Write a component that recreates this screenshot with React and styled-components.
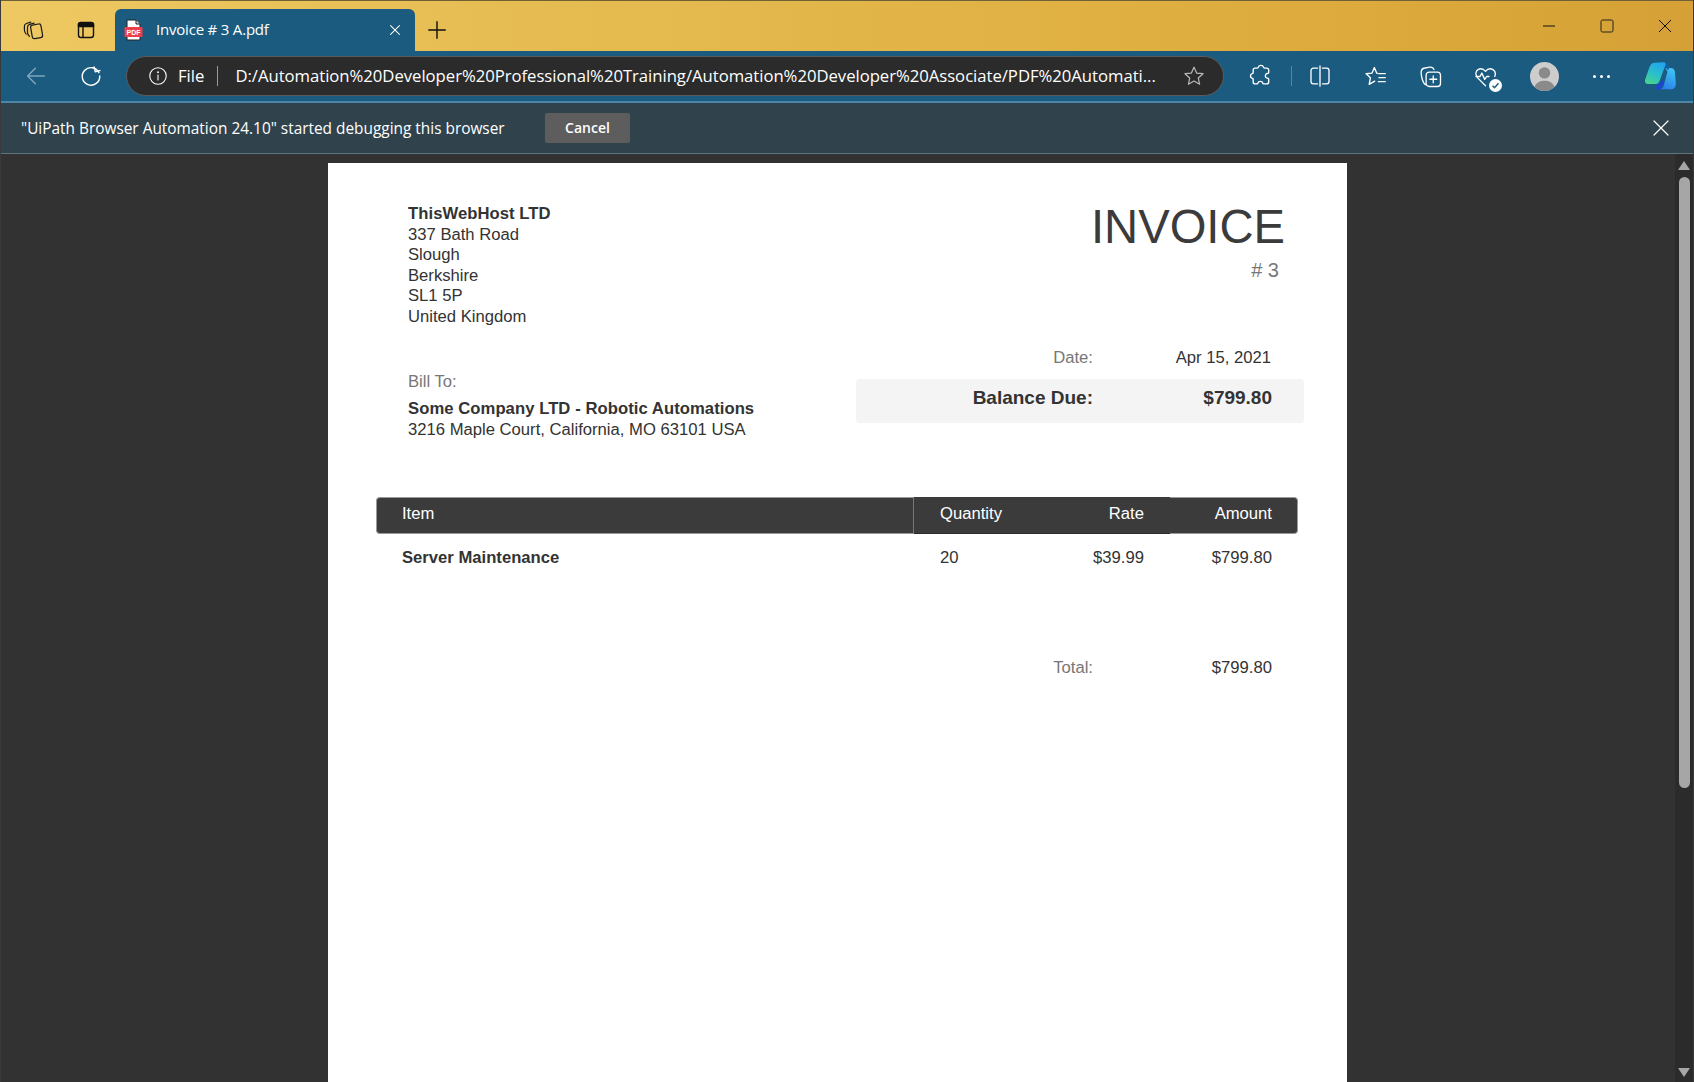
import React from "react";
import styled, { createGlobalStyle } from "styled-components";

const Global = createGlobalStyle`
  html, body { margin: 0; padding: 0; background: #323232; overflow: hidden; }
  * { box-sizing: border-box; }
`;

const Stroke = ({ size = 20, color = "#fff", w = 1.3, children }) => (
  <svg width={size} height={size} viewBox="0 0 20 20" fill="none" stroke={color} strokeWidth={w} strokeLinecap="round" strokeLinejoin="round">
    {children}
  </svg>
);

export default function App() {
  return (
    <Window>
      <Global />
      <TitleBar>
        <LeftIcons>
          <TabIconBtn>
            <Stroke size={22} color="#1a1a1a" w={1.1}>
              <rect x="8.5" y="5" width="9.5" height="12.5" rx="2" transform="rotate(-10 13 11)" />
              <path d="M6.8 15.800C5.600 14.800 5 13.500 5 12V7.500c0-1.200.7-2.200 2-2.600l4-1.200" />
              <path d="M3.800 13.800C2.800 12.800 2.200 11.500 2.200 10V6.500c0-1.200.6-2 1.800-2.400l4-1.300" />
            </Stroke>
          </TabIconBtn>
          <TabIconBtn>
            <Stroke color="#111" w={1.4}>
              <rect x="2.500" y="2.500" width="15" height="15" rx="2.500" />
              <path d="M2.500 3.500h15v3h-15z" fill="#111" />
              <path d="M7 6v11" />
            </Stroke>
          </TabIconBtn>
        </LeftIcons>
        <Tab>
          <svg width="19" height="22" viewBox="0 0 19 22">
            <path d="M3 1h9l4 4v16H3z" fill="#fff" stroke="#222" />
            <path d="M12 1v4h4" fill="#ddd" stroke="#222" />
            <rect x="0.500" y="8" width="18" height="10" rx="1" fill="#ee3d4b" />
            <text x="9.500" y="15.800" textAnchor="middle" fontSize="7" fontWeight="700" fontFamily="Liberation Sans, sans-serif" fill="#fff">PDF</text>
          </svg>
          <TabTitle>Invoice # 3 A.pdf</TabTitle>
          <Stroke size={16} w={1.3}>
            <path d="M4.500 4.500l11 11M15.500 4.500l-11 11" />
          </Stroke>
        </Tab>
        <NewTab>
          <Stroke size={22} color="#111" w={1.3}>
            <path d="M10 2.500v15M2.500 10h15" />
          </Stroke>
        </NewTab>
        <WindowControls>
          <WinBtn>
            <svg width="14" height="14" viewBox="0 0 14 14"><path d="M1 7h12" stroke="#111" strokeWidth="1" /></svg>
          </WinBtn>
          <WinBtn>
            <svg width="14" height="14" viewBox="0 0 14 14"><rect x="1" y="1" width="12" height="12" rx="1.500" fill="none" stroke="#222" strokeWidth="1" /></svg>
          </WinBtn>
          <WinBtn>
            <svg width="14" height="14" viewBox="0 0 14 14"><path d="M1 1l12 12M13 1L1 13" stroke="#111" strokeWidth="1" /></svg>
          </WinBtn>
        </WindowControls>
      </TitleBar>

      <AddressBar>
        <NavBtn>
          <Stroke size={24} color="#7fa6bd" w={1.2}>
            <path d="M17 10H3M9.500 3.500L3 10l6.500 6.500" />
          </Stroke>
        </NavBtn>
        <NavBtn>
          <Stroke size={24} w={1.2}>
            <path d="M16.600 7.200A7.300 7.300 0 1 0 17.300 10" />
            <path d="M12.600 2.500l.9 3.900 3.900-.9" />
          </Stroke>
        </NavBtn>
        <UrlPill>
          <Stroke size={20} w={1.1}>
            <circle cx="10" cy="10" r="8.200" />
            <path d="M10 9v5" />
            <circle cx="10" cy="6.200" r=".4" fill="#fff" />
          </Stroke>
          <Scheme>File</Scheme>
          <Divider />
          <Url>D:/Automation%20Developer%20Professional%20Training/Automation%20Developer%20Associate/PDF%20Automati...</Url>
          <Stroke size={22} color="#b9b9b9" w={1.1}>
            <path d="M10 2l2.400 5.300 5.800.6-4.300 3.900 1.200 5.700L10 14.600l-5.100 2.900 1.200-5.700L1.800 7.900l5.800-.6z" />
          </Stroke>
        </UrlPill>
        <ToolIcons>
          <PuzzleBtn>
            <Stroke size={26} w={1.05}>
              <path d="M8 3.200c.5-1.800 3.400-1.800 3.900 0 .1.500.4.700 1 .7h1.500c.9 0 1.500.6 1.500 1.500v1.900c0 .5-.4.8-.9.8-2-.2-2.300 3.600 0 3.500.5 0 .9.300.9.800v2.200c0 .9-.6 1.500-1.500 1.500h-2.200c-.5 0-.8-.3-.9-.8-.3-1.600-3.300-1.600-3.600 0-.1.500-.4.800-.9.800H5.500c-.9 0-1.500-.6-1.500-1.500v-2c0-.5-.3-.8-.8-.9-1.700-.4-1.700-3.100 0-3.500.5-.1.800-.4.800-.9V5.400c0-.9.6-1.500 1.500-1.500H7c.5 0 .9-.2 1-.7z" />
            </Stroke>
          </PuzzleBtn>
          <ToolDivider />
          <ToolBtn>
            <Stroke size={24} w={1.1}>
              <path d="M8 3.500H4.500a2 2 0 0 0-2 2v9a2 2 0 0 0 2 2H8M12 3.500h3.500a2 2 0 0 1 2 2v9a2 2 0 0 1-2 2H12M10 1.500v17" />
            </Stroke>
          </ToolBtn>
          <ToolBtn>
            <Stroke size={23} w={1.15}>
              <path d="M12 7.200L11 7 9 2.200 7 7l-5.200.6L5.600 11l-1.100 5.800L9.300 14" />
              <path d="M13 7.500h5.500M13 11h5.500M12.500 14.500h6" />
            </Stroke>
          </ToolBtn>
          <ToolBtn>
            <Stroke size={25} w={1.05}>
              <path d="M6 16.500C3.500 15 3 12 2.500 7.500 2.300 5 3.300 3.500 5.500 3.200l4-.7c1.500-.2 2.700.4 3.300 2" />
              <rect x="6.500" y="6.500" width="11.500" height="11.500" rx="2.500" />
              <path d="M12.200 9.500v5.500M9.500 12.200H15" />
            </Stroke>
          </ToolBtn>
          <ToolBtn>
            <OverlayWrap>
              <Stroke size={23} w={1.15}>
                <path d="M10 18l-7-7C1 8.500 1.200 5.500 3.500 4c2.300-1.300 4.800-.6 6.500 1.500C11.700 3.400 14.200 2.700 16.500 4c2 1.300 2.500 3.700 1.500 6" />
                <path d="M1.800 10h3.500l1.500-3 2.500 5.500 1.700-2.500h2" />
              </Stroke>
              <CheckBadge>
                <svg width="13" height="13" viewBox="0 0 13 13" fill="none"><path d="M3.500 6.800l2 1.900 4-4.500" stroke="#1b5b80" strokeWidth="1.500" /></svg>
              </CheckBadge>
            </OverlayWrap>
          </ToolBtn>
          <Avatar>
            <svg width="29" height="29" viewBox="0 0 28 28">
              <circle cx="14" cy="10.500" r="5.500" fill="#8a8a8a" />
              <path d="M4 25c1.500-5.500 6-7 10-7s8.500 1.500 10 7c-3 2.500-6.500 3-10 3s-7-.5-10-3z" fill="#8a8a8a" />
            </svg>
          </Avatar>
          <MoreBtn>
            <Dot /><Dot /><Dot />
          </MoreBtn>
          <CopilotBtn>
            <svg width="32" height="30" viewBox="0 0 30 28">
              <defs>
                <linearGradient id="cpA" x1="0.700" y1="0" x2="0.200" y2="1">
                  <stop offset="0" stopColor="#22a5ee" />
                  <stop offset="0.550" stopColor="#2cc0c8" />
                  <stop offset="1" stopColor="#48d58a" />
                </linearGradient>
                <linearGradient id="cpB" x1="0.700" y1="0" x2="0.300" y2="1">
                  <stop offset="0" stopColor="#3fc4f6" />
                  <stop offset="1" stopColor="#2a7fe8" />
                </linearGradient>
              </defs>
              <path d="M20 6.500h5c2.500 0 3.500 1.500 4 3.500l.8 11c.2 3.500-1.800 5.500-4.800 5.500H15c2-.5 3-2 3.500-3.500L22 10z" fill="url(#cpB)" />
              <path d="M17 1.200c3-.2 5.500 1.300 6 4.300l.5 2.500h-2L20 5c0-2-1-3.400-3-3.800z" fill="#0f62b0" />
              <path d="M13 21.500l6-4.500-1.500 6c-.5 2.500-2.500 4-4.500 4-1.500 0-2-2-1.500-3.500z" fill="#1d46d0" />
              <path d="M10 1.500l8-.5c2 0 3 1.500 2 3l-5.500 15c-.7 2-2 2.500-3.500 2.500H4c-2.500 0-3.500-1.500-3-4L5 6c1-3 2.500-4.500 5-4.500z" fill="url(#cpA)" />
            </svg>
          </CopilotBtn>
        </ToolIcons>
      </AddressBar>

      <InfoBar>
        <InfoText>"UiPath Browser Automation 24.10" started debugging this browser</InfoText>
        <CancelButton>Cancel</CancelButton>
        <InfoClose>
          <Stroke size={20} w={1.2}>
            <path d="M3 3l14 14M17 3L3 17" />
          </Stroke>
        </InfoClose>
      </InfoBar>

      <Viewer>
        <PageArea>
          <Page>
            <TopRow>
              <Sender>
                <strong>ThisWebHost LTD</strong>
                <span>337 Bath Road</span>
                <span>Slough</span>
                <span>Berkshire</span>
                <span>SL1 5P</span>
                <span>United Kingdom</span>
              </Sender>
              <Heading>
                <h1>INVOICE</h1>
                <InvoiceNo># 3</InvoiceNo>
              </Heading>
            </TopRow>
            <MetaRow>
              <BillTo>
                <Muted>Bill To:</Muted>
                <strong>Some Company LTD - Robotic Automations</strong>
                <span>3216 Maple Court, California, MO 63101 USA</span>
              </BillTo>
              <Summary>
                <DateRow>
                  <Muted>Date:</Muted>
                  <DateValue>Apr 15, 2021</DateValue>
                </DateRow>
                <Balance>
                  <span>Balance Due:</span>
                  <BalanceValue>$799.80</BalanceValue>
                </Balance>
              </Summary>
            </MetaRow>
            <ItemTable>
              <HeadRow>
                <HeadItem>Item</HeadItem>
                <HeadMiddle>
                  <HeadCell $w={127}>Quantity</HeadCell>
                  <HeadCell $w={129} $right>Rate</HeadCell>
                </HeadMiddle>
                <HeadAmount>Amount</HeadAmount>
              </HeadRow>
              <BodyRow>
                <BodyItem>Server Maintenance</BodyItem>
                <BodyCell $w={127}>20</BodyCell>
                <BodyCell $w={129} $right>$39.99</BodyCell>
                <BodyCell $w={128} $right>$799.80</BodyCell>
              </BodyRow>
            </ItemTable>
            <TotalRow>
              <Muted>Total:</Muted>
              <TotalValue>$799.80</TotalValue>
            </TotalRow>
          </Page>
        </PageArea>
        <ScrollTrack>
          <ArrowUp />
          <Thumb />
          <ArrowDown />
        </ScrollTrack>
      </Viewer>
    </Window>
  );
}

const Window = styled.div`
  width: 1694px;
  height: 1082px;
  display: flex;
  flex-direction: column;
  overflow: hidden;
  border-left: 1px solid #3a3a3a;
  border-right: 1px solid #3a3a3a;
  font-family: "Open Sans", "Noto Sans", sans-serif;
  background: #323232;
`;

const TitleBar = styled.div`
  height: 51px;
  flex: none;
  display: flex;
  align-items: flex-end;
  border-top: 1px solid #6f6136;
  background: linear-gradient(90deg, #eec862 0%, #e5bb50 35%, #dfae40 70%, #d5a136 100%);
`;

const LeftIcons = styled.div`
  display: flex;
  height: 100%;
  align-items: center;
  padding-top: 8px;
  gap: 13px;
  padding-left: 12px;
  width: 114px;
`;

const TabIconBtn = styled.div`
  width: 40px;
  height: 40px;
  flex: none;
  display: flex;
  align-items: center;
  justify-content: center;
`;

const Tab = styled.div`
  width: 300px;
  height: 42px;
  background: #1b5b80;
  border-radius: 6px 6px 0 0;
  display: flex;
  align-items: center;
  padding: 0 12px 0 9px;
  color: #fff;
`;

const TabTitle = styled.span`
  flex: 1;
  margin-left: 13px;
  padding-bottom: 2px;
  font-size: 15px;
  font-family: "Open Sans", sans-serif;
  letter-spacing: -0.2px;
`;

const NewTab = styled.div`
  width: 40px;
  height: 42px;
  margin-left: 2px;
  display: flex;
  align-items: center;
  justify-content: center;
`;

const WindowControls = styled.div`
  margin-left: auto;
  margin-right: -1px;
  height: 100%;
  display: flex;
  align-items: flex-start;
`;

const WinBtn = styled.div`
  width: 58px;
  height: 50px;
  display: flex;
  align-items: center;
  justify-content: center;
`;

const AddressBar = styled.div`
  height: 52px;
  flex: none;
  background: #1b5b80;
  border-bottom: 2px solid #4a87a9;
  display: flex;
  align-items: center;
  padding-left: 15px;
`;

const NavBtn = styled.div`
  width: 40px;
  height: 40px;
  margin-right: 15px;
  display: flex;
  align-items: center;
  justify-content: center;
`;

const UrlPill = styled.div`
  width: 1098px;
  height: 40px;
  border: 1px solid #5b5b5b;
  border-radius: 20px;
  background: #2b2b2b;
  display: flex;
  align-items: center;
  padding: 0 18px 0 21px;
  color: #fff;
  font-size: 16.7px;
`;

const Scheme = styled.span`
  margin-left: 10px;
  padding-bottom: 2px;
`;

const Divider = styled.div`
  width: 1px;
  height: 20px;
  background: #9a9a9a;
  margin: 0 17px 0 13px;
`;

const Url = styled.span`
  flex: 1;
  padding-bottom: 2px;
  white-space: nowrap;
  overflow: hidden;
  letter-spacing: -0.03px;
`;

const ToolIcons = styled.div`
  display: flex;
  align-items: center;
  margin-left: 17px;
`;

const ToolBtn = styled.div`
  width: 40px;
  height: 40px;
  margin-right: 15px;
  display: flex;
  align-items: center;
  justify-content: center;
`;

const PuzzleBtn = styled(ToolBtn)`
  margin-right: 0;
`;

const ToolDivider = styled.div`
  width: 1px;
  height: 20px;
  background: #4f8aab;
  margin: 0 8px 0 10px;
`;

const OverlayWrap = styled.div`
  position: relative;
  width: 23px;
  height: 23px;
`;

const CheckBadge = styled.div`
  position: absolute;
  right: -5px;
  bottom: -4px;
  width: 13px;
  height: 13px;
  border-radius: 50%;
  background: #fff;
  display: flex;
`;

const Avatar = styled.div`
  width: 29px;
  height: 29px;
  margin: 0 34px 0 10px;
  border-radius: 50%;
  background: #cdcdcd;
  overflow: hidden;
`;

const MoreBtn = styled.div`
  display: flex;
  gap: 4px;
  width: 17px;
  margin-right: 34px;
`;

const Dot = styled.span`
  width: 3px;
  height: 3px;
  flex: none;
  border-radius: 50%;
  background: #fff;
`;

const CopilotBtn = styled.div`
  width: 32px;
  height: 30px;
`;

const InfoBar = styled.div`
  height: 51px;
  flex: none;
  background: #30434d;
  border-bottom: 1px solid #5f7681;
  display: flex;
  align-items: center;
  padding-left: 20px;
  color: #fff;
`;

const InfoText = styled.span`
  font-size: 15.4px;
  font-family: "Open Sans", sans-serif;
  width: 524px;
  white-space: nowrap;
`;

const CancelButton = styled.button`
  width: 85px;
  height: 30px;
  padding: 0 0 2px;
  border: 0;
  border-radius: 2px;
  background: #5d5d5d;
  color: #fff;
  font: 600 14px "Open Sans", sans-serif;
`;

const InfoClose = styled.div`
  margin-left: auto;
  margin-right: 22px;
  display: flex;
`;

const Viewer = styled.div`
  flex: 1;
  min-height: 0;
  display: flex;
  background: #323232;
`;

const PageArea = styled.div`
  flex: 1;
  display: flex;
  justify-content: flex-start;
  padding: 9px 0 0 327px;
  overflow: hidden;
`;

const Page = styled.div`
  width: 1019px;
  height: 1000px;
  background: #fff;
  padding: 41px 42px 0 48px;
  color: #333;
  font-family: "Liberation Sans", Arial, sans-serif;
  font-size: 16.65px;
  strong { letter-spacing: 0.06px; }
`;

const TopRow = styled.div`
  display: flex;
  justify-content: space-between;
  padding-left: 32px;
  padding-right: 20px;
`;

const Sender = styled.div`
  display: flex;
  flex-direction: column;
  line-height: 20.5px;
  strong { font-weight: 700; }
`;

const Heading = styled.div`
  text-align: right;
  h1 {
    margin: -1px 0 0;
    font-size: 47.2px;
    line-height: 48px;
    font-weight: 400;
    color: #3b3b3b;
  }
`;

const InvoiceNo = styled.div`
  margin-top: 7px;
  padding-right: 6px;
  font-size: 20px;
  line-height: 24px;
  color: #777;
`;

const MetaRow = styled.div`
  display: flex;
  justify-content: space-between;
  margin-top: 17px;
`;

const BillTo = styled.div`
  display: flex;
  flex-direction: column;
  padding-left: 32px;
  padding-top: 27px;
  line-height: 21px;
  strong { font-weight: 700; margin-top: 6px; }
`;

const Muted = styled.span`
  color: #777;
`;

const Summary = styled.div`
  width: 448px;
  margin-right: 1px;
  padding-top: 1px;
  display: flex;
  flex-direction: column;
`;

const DateRow = styled.div`
  display: flex;
  justify-content: flex-end;
  height: 34px;
  padding-right: 33px;
  align-items: flex-start;
  line-height: 25px;
`;

const DateValue = styled.span`
  width: 178px;
  text-align: right;
  color: #333;
`;

const Balance = styled.div`
  height: 44px;
  border-radius: 4px;
  background: #f4f4f4;
  display: flex;
  justify-content: flex-end;
  align-items: center;
  padding: 0 32px 7px 0;
  font-size: 19px;
  font-weight: 700;
`;

const BalanceValue = styled.span`
  width: 179px;
  text-align: right;
`;

const ItemTable = styled.div`
  margin-top: 57px;
`;

const HeadRow = styled.div`
  display: flex;
  width: 922px;
  height: 37px;
  color: #fff;
`;

const HeadItem = styled.div`
  flex: 1;
  padding: 0 0 3px 25px;
  display: flex;
  align-items: center;
  background: #3b3b3b;
  border: 1px solid #999;
  border-right-color: #777;
  border-radius: 4px 0 0 4px;
`;

const HeadMiddle = styled.div`
  display: flex;
  align-items: center;
  background: #3b3b3b;
  padding-bottom: 3px;
  border-bottom: 1px solid #2a2a2a;
`;

const HeadCell = styled.div`
  width: ${(p) => p.$w}px;
  padding: 0 26px 0 26px;
  text-align: ${(p) => (p.$right ? "right" : "left")};
`;

const HeadAmount = styled.div`
  width: 128px;
  padding: 0 25px 3px 0;
  display: flex;
  align-items: center;
  justify-content: flex-end;
  background: #3b3b3b;
  border: 1px solid #999;
  border-left: 0;
  border-radius: 0 4px 4px 0;
`;

const BodyRow = styled.div`
  display: flex;
  width: 922px;
  margin-top: 12px;
  line-height: 24px;
`;

const BodyItem = styled.div`
  flex: 1;
  padding-left: 26px;
  font-weight: 700;
`;

const BodyCell = styled.div`
  width: ${(p) => p.$w}px;
  padding: 0 26px 0 26px;
  text-align: ${(p) => (p.$right ? "right" : "left")};
`;

const TotalRow = styled.div`
  display: flex;
  justify-content: flex-end;
  width: 922px;
  margin-top: 86px;
  padding-right: 26px;
  line-height: 24px;
`;

const TotalValue = styled.span`
  width: 179px;
  text-align: right;
`;

const ScrollTrack = styled.div`
  width: 18px;
  flex: none;
  background: #2b2b2b;
  display: flex;
  flex-direction: column;
  align-items: center;
  padding-top: 7px;
`;

const ArrowUp = styled.div`
  width: 0;
  height: 0;
  border-left: 6px solid transparent;
  border-right: 6px solid transparent;
  border-bottom: 9px solid #a6a6a6;
`;

const Thumb = styled.div`
  width: 11px;
  height: 611px;
  margin-top: 7px;
  border-radius: 6px;
  background: #a6a6a6;
`;

const ArrowDown = styled.div`
  margin-top: auto;
  margin-bottom: 5px;
  width: 0;
  height: 0;
  border-left: 6px solid transparent;
  border-right: 6px solid transparent;
  border-top: 9px solid #a6a6a6;
`;
